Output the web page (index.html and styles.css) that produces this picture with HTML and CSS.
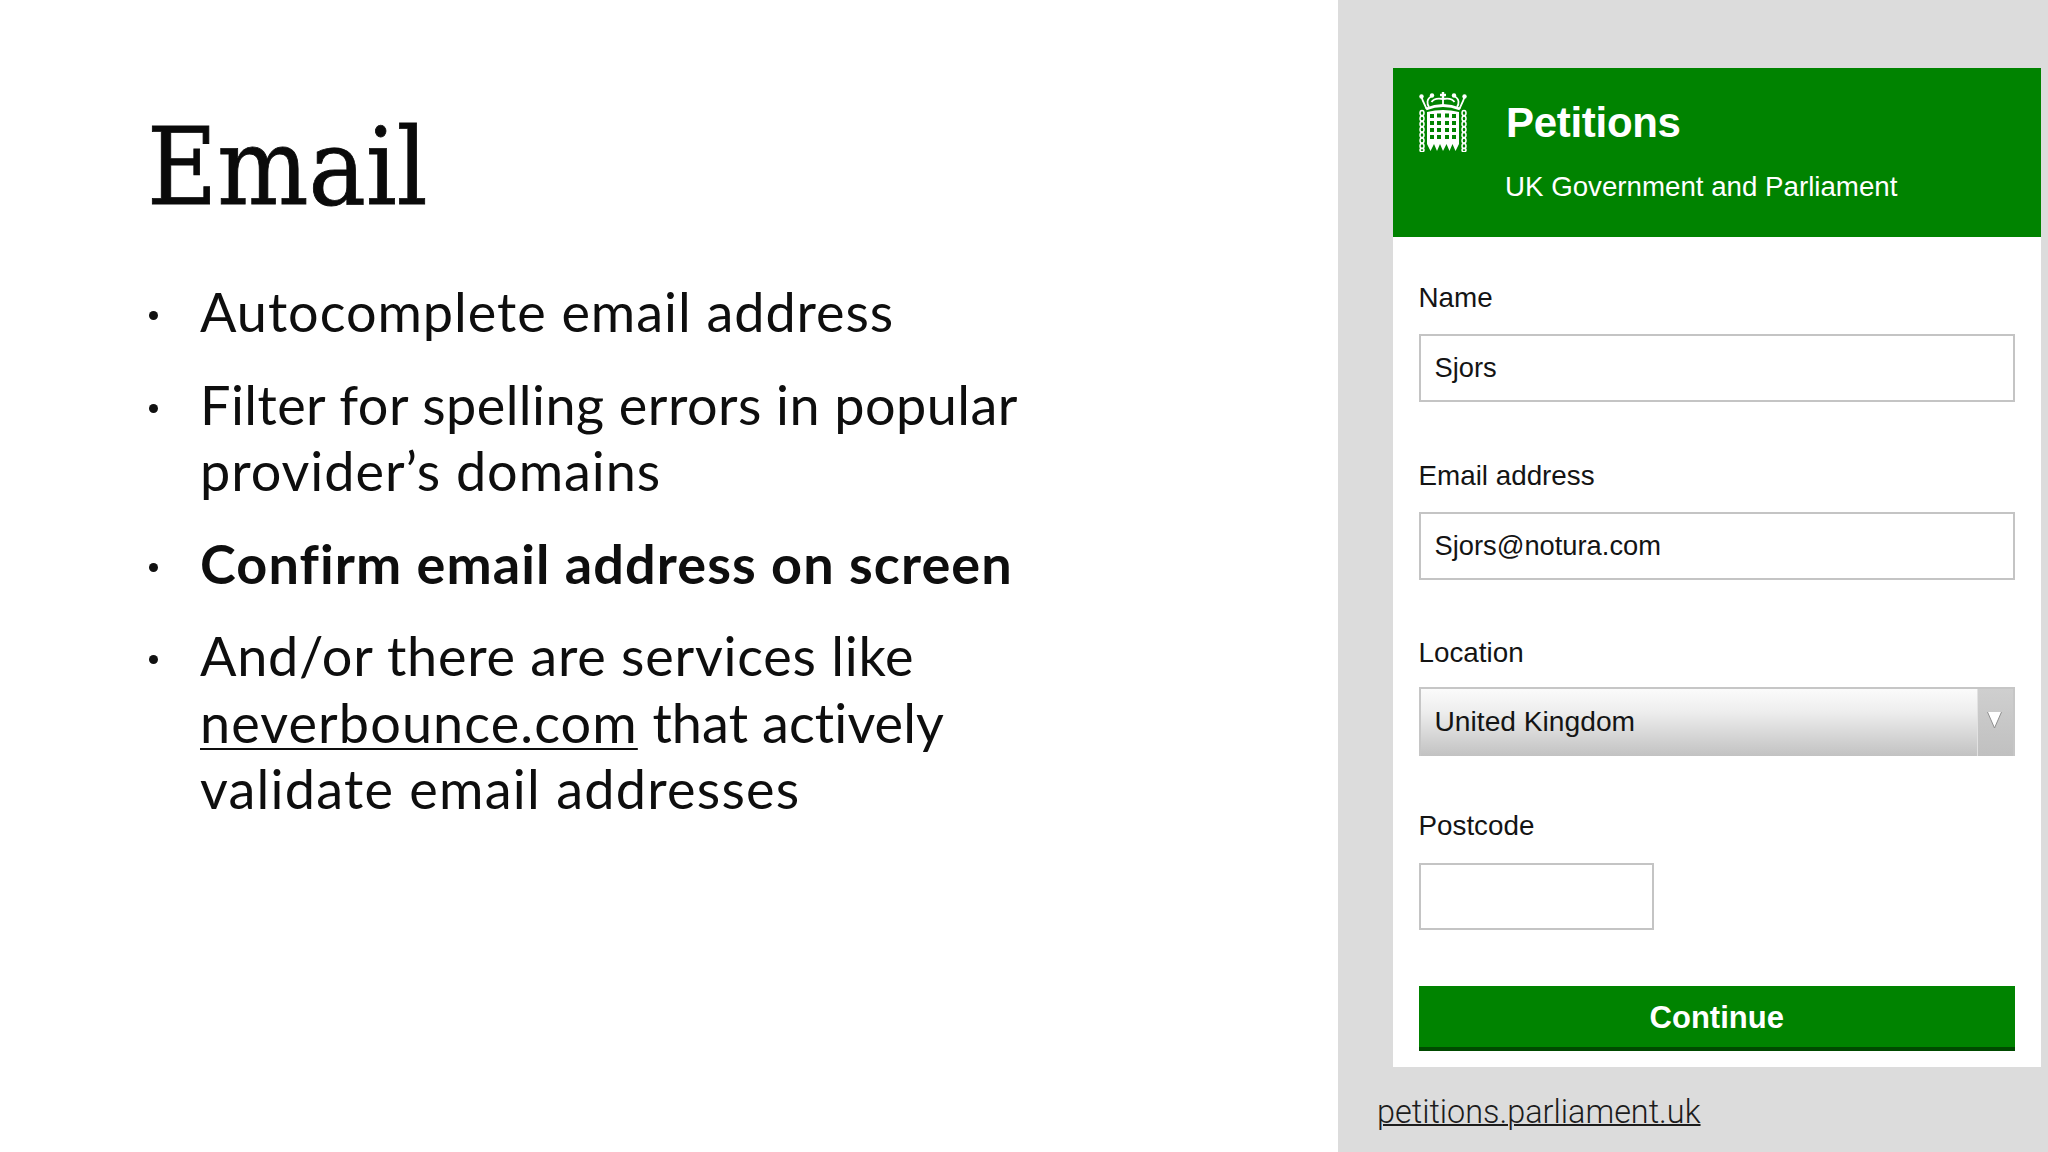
FILE: index.html
```html
<!DOCTYPE html>
<html lang="en">
<head>
<meta charset="utf-8">
<title>Email</title>
<link rel="stylesheet" href="styles.css">
</head>
<body>
<main class="slide">
  <section class="content">
    <h1 class="title">Email</h1>
    <ul class="points">
      <li class="loose">Autocomplete email address</li>
      <li class="tight">Filter for spelling errors in popular <span class="medium">provider’s domains</span></li>
      <li class="strong">Confirm email address on screen</li>
      <li>And/or there are services like <a class="ref" href="#">neverbounce.com</a> <span class="narrow">that actively</span> <span class="wide">validate email addresses</span></li>
    </ul>
  </section>
  <aside class="panel">
    <div class="card">
      <header class="head">
        <svg class="logo" viewBox="0 0 48 60" aria-hidden="true">
          <g fill="none" stroke="#fff" stroke-width="1.800">
            <path d="M2.500 5C4 10 6 13 7.500 17"/>
            <path d="M45.500 5C44 10 42 13 40.500 17"/>
            <path d="M13 4C7 7 8 12 10 15"/>
            <path d="M35 4C41 7 40 12 38 15"/>
            <path d="M24 4V13"/>
            <path d="M24 7C19 6 15 6 12.500 10"/>
            <path d="M24 7C29 6 33 6 35.500 10"/>
            <path d="M7 17Q24 10 41 17" stroke-width="2.800"/>
          </g>
          <g fill="#fff">
            <circle cx="2.500" cy="4.500" r="2.200"/>
            <circle cx="13" cy="3.500" r="2.200"/>
            <circle cx="35" cy="3.500" r="2.200"/>
            <circle cx="45.500" cy="4.500" r="2.200"/>
            <rect x="22.800" y="0" width="2.400" height="6"/>
            <rect x="21" y="1.800" width="6" height="2.400"/>
            <path d="M8 20q16-4 32 0v32l-3.500 7-3-7-3 7-3-7-3.500 7-3-7-3 7-3-7-3.500 7L8 52z"/>
          </g>
          <g fill="#008300">
            <rect x="11" y="22" width="4" height="4"/><rect x="18" y="21.500" width="4" height="4"/><rect x="26" y="21.500" width="4" height="4"/><rect x="33" y="22" width="4" height="4"/>
            <rect x="11" y="29" width="4" height="4"/><rect x="18" y="29" width="4" height="4"/><rect x="26" y="29" width="4" height="4"/><rect x="33" y="29" width="4" height="4"/>
            <rect x="11" y="36" width="4" height="4"/><rect x="18" y="36" width="4" height="4"/><rect x="26" y="36" width="4" height="4"/><rect x="33" y="36" width="4" height="4"/>
            <rect x="11" y="43" width="4" height="4"/><rect x="18" y="43" width="4" height="4"/><rect x="26" y="43" width="4" height="4"/><rect x="33" y="43" width="4" height="4"/>
          </g>
          <g fill="none" stroke="#fff" stroke-width="1.500">
            <ellipse cx="3" cy="21" rx="2" ry="2.600"/><ellipse cx="3" cy="26.500" rx="2" ry="2.600"/><ellipse cx="3" cy="32" rx="2" ry="2.600"/><ellipse cx="3" cy="37.500" rx="2" ry="2.600"/><ellipse cx="3" cy="43" rx="2" ry="2.600"/><ellipse cx="3" cy="48.500" rx="2" ry="2.600"/><ellipse cx="3" cy="54" rx="2" ry="2.600"/><ellipse cx="3" cy="58" rx="2" ry="1.800"/>
            <ellipse cx="45" cy="21" rx="2" ry="2.600"/><ellipse cx="45" cy="26.500" rx="2" ry="2.600"/><ellipse cx="45" cy="32" rx="2" ry="2.600"/><ellipse cx="45" cy="37.500" rx="2" ry="2.600"/><ellipse cx="45" cy="43" rx="2" ry="2.600"/><ellipse cx="45" cy="48.500" rx="2" ry="2.600"/><ellipse cx="45" cy="54" rx="2" ry="2.600"/><ellipse cx="45" cy="58" rx="2" ry="1.800"/>
          </g>
        </svg>
        <div class="brand">
          <div class="brand-name">Petitions</div>
          <div class="brand-sub">UK Government and Parliament</div>
        </div>
      </header>
      <form class="form">
        <div class="label label-name">Name</div>
        <div class="field">Sjors</div>
        <div class="label label-email">Email address</div>
        <div class="field">Sjors@notura.com</div>
        <div class="label label-location">Location</div>
        <div class="select">
          <span class="select-text">United Kingdom</span>
          <span class="select-arrow"><svg class="arrow" viewBox="0 0 14 16" aria-hidden="true"><path d="M0 0h14L7 16z" fill="#fff"/><path d="M0 0L7 16L14 0" fill="none" stroke="#8f8f8f" stroke-width="1"/></svg></span>
        </div>
        <div class="label label-postcode">Postcode</div>
        <div class="field field-short"></div>
        <div class="button">Continue</div>
      </form>
    </div>
    <a class="source" href="#">petitions.parliament.uk</a>
  </aside>
</main>
</body>
</html>
```
FILE: styles.css
```css
* { box-sizing: border-box; }
html, body { margin: 0; padding: 0; }
body { width: 2048px; height: 1152px; overflow: hidden; background: #fff; }
.slide { display: flex; width: 2048px; height: 1152px; }

.content { width: 1338px; padding: 111px 0 0 147px; color: #0e0e0e; }
.title {
  margin: 0;
  font-family: "DejaVu Serif Condensed", "DejaVu Serif", serif;
  font-stretch: condensed;
  font-weight: 400;
  font-size: 107px;
  line-height: 112px;
  color: #0a0a0a;
  -webkit-text-stroke: 0.8px #0a0a0a;
}
.points {
  list-style: none;
  margin: 56px 0 0 2px;
  padding: 0;
  width: 880px;
  font-family: Lato, "Open Sans", sans-serif;
  font-size: 54px;
  line-height: 66.500px;
  letter-spacing: 0.75px;
}
.points li { position: relative; padding-left: 51px; margin-bottom: 26px; }
.points li::before {
  content: "";
  position: absolute;
  left: 0;
  top: 32px;
  width: 9px;
  height: 9px;
  border-radius: 50%;
  background: #111;
}
.points .loose { letter-spacing: 0.95px; }
.points .tight { letter-spacing: 0.45px; }
.points .strong { font-weight: 700; letter-spacing: 1.1px; }
.wide { letter-spacing: 1.25px; }
.medium { letter-spacing: 0.95px; }
.narrow { letter-spacing: 0.1px; }
.ref { color: inherit; letter-spacing: 1.1px; text-decoration: underline; text-decoration-thickness: 2px; text-underline-offset: 5px; }

.panel { width: 710px; padding: 68px 7px 0 39px; background: #dcdcdc; font-family: "Liberation Sans", Arial, sans-serif; }
.card { margin-left: 16px; height: 999px; background: #fff; }
.head { display: flex; align-items: flex-start; height: 169px; padding: 24px 0 0 26px; background: #008300; color: #fff; }
.logo { width: 48px; height: 60px; flex: none; }
.brand { margin: 7px 0 0 39px; }
.brand-name { font-size: 42px; font-weight: 700; line-height: 48px; letter-spacing: -0.3px; }
.brand-sub { margin-top: 22px; margin-left: -1px; font-size: 27.700px; line-height: 36px; }

.form { padding: 0 26px 0 25.500px; color: #141414; }
.label { font-size: 27.800px; line-height: 36px; }
.label-name { padding-top: 43px; height: 97px; }
.label-email { margin-top: 56px; margin-bottom: 18px; }
.label-location { margin-top: 55px; margin-bottom: 16px; }
.label-postcode { margin-top: 52px; margin-bottom: 19px; }
.field {
  height: 68px;
  padding: 0 14px;
  border: 2px solid #c4c4c4;
  background: #fff;
  font-size: 27.300px;
  line-height: 64px;
}
.field-short { width: 235px; height: 67px; }
.select {
  display: flex;
  justify-content: space-between;
  height: 69px;
  border: 2px solid #c6c6c6;
  border-bottom: 0;
  background: linear-gradient(#fbfbfb 0%, #ededed 35%, #cfcfcf 80%, #c2c2c2 100%);
  font-size: 28.200px;
  line-height: 64px;
}
.select-text { padding-left: 14px; }
.select-arrow {
  display: flex;
  justify-content: center;
  width: 36px;
  padding: 23px 2px 0 0;
  background: linear-gradient(#cfcfcf, #c0c0c0);
  border-left: 1px solid #e2e2e2;
}
.arrow { width: 15px; height: 16px; }
.button {
  height: 65px;
  margin-top: 56px;
  border-bottom: 4px solid #004a00;
  background: #008300;
  color: #fff;
  font-size: 31px;
  font-weight: 700;
  line-height: 63px;
  text-align: center;
}
.source {
  display: block;
  margin-top: 25px;
  color: #1c1c1c;
  font-family: Roboto, "Liberation Sans", sans-serif;
  font-size: 32.400px;
  font-weight: 300;
  line-height: 40px;
  text-decoration: underline;
  text-decoration-thickness: 1.500px;
}
```
